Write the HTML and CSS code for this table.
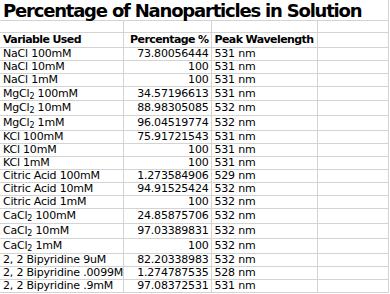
FILE: index.html
```html
<!DOCTYPE html>
<html>
<head>
<meta charset="utf-8">
<link rel="stylesheet" href="styles.css">
</head>
<body>
<table class="sheet">
  <colgroup>
    <col class="c1"><col class="c2"><col class="c3"><col class="c4">
  </colgroup>
  <tr class="title-row"><td colspan="4" class="title">Percentage of Nanoparticles in Solution</td></tr>
  <tr class="empty"><td></td><td></td><td></td><td></td></tr>
  <tr class="head tall"><td>Variable Used</td><td class="num">Percentage %</td><td>Peak Wavelength</td><td></td></tr>
  <tr><td>NaCl 100mM</td><td class="num">73.80056444</td><td>531 nm</td><td></td></tr>
  <tr><td>NaCl 10mM</td><td class="num">100</td><td>531 nm</td><td></td></tr>
  <tr><td>NaCl 1mM</td><td class="num">100</td><td>531 nm</td><td></td></tr>
  <tr class="mid"><td>MgCl<sub>2</sub> 100mM</td><td class="num">34.57196613</td><td>531 nm</td><td></td></tr>
  <tr class="tall"><td>MgCl<sub>2</sub> 10mM</td><td class="num">88.98305085</td><td>532 nm</td><td></td></tr>
  <tr class="tall"><td>MgCl<sub>2</sub> 1mM</td><td class="num">96.04519774</td><td>532 nm</td><td></td></tr>
  <tr><td>KCl 100mM</td><td class="num">75.91721543</td><td>531 nm</td><td></td></tr>
  <tr><td>KCl 10mM</td><td class="num">100</td><td>531 nm</td><td></td></tr>
  <tr><td>KCl 1mM</td><td class="num">100</td><td>531 nm</td><td></td></tr>
  <tr><td>Citric Acid 100mM</td><td class="num">1.273584906</td><td>529 nm</td><td></td></tr>
  <tr><td>Citric Acid 10mM</td><td class="num">94.91525424</td><td>532 nm</td><td></td></tr>
  <tr><td>Citric Acid 1mM</td><td class="num">100</td><td>532 nm</td><td></td></tr>
  <tr class="tall"><td>CaCl<sub>2</sub> 100mM</td><td class="num">24.85875706</td><td>532 nm</td><td></td></tr>
  <tr class="tall"><td>CaCl<sub>2</sub> 10mM</td><td class="num">97.03389831</td><td>532 nm</td><td></td></tr>
  <tr class="tall"><td>CaCl<sub>2</sub> 1mM</td><td class="num">100</td><td>532 nm</td><td></td></tr>
  <tr><td>2, 2 Bipyridine 9uM</td><td class="num">82.20338983</td><td>532 nm</td><td></td></tr>
  <tr><td>2, 2 Bipyridine .0099M</td><td class="num">1.274787535</td><td>528 nm</td><td></td></tr>
  <tr><td>2, 2 Bipyridine .9mM</td><td class="num">97.08372531</td><td>531 nm</td><td></td></tr>
</table>
</body>
</html>
```
FILE: styles.css
```css
html, body {
  margin: 0;
  padding: 0;
  background: #ffffff;
}
.sheet {
  border-collapse: collapse;
  table-layout: fixed;
  width: 388px;
  font-family: "DejaVu Sans", Verdana, sans-serif;
  font-size: 11px;
  letter-spacing: -0.2px;
  color: #000;
}
.c1 { width: 123px; }
.c2 { width: 88px; }
.c3 { width: 106px; }
.c4 { width: 71px; }
.sheet td {
  border: 1px solid #d3d3d3;
  padding: 0 2px 0 3px;
  height: 12px;
  line-height: 12px;
  white-space: nowrap;
  overflow: hidden;
  vertical-align: bottom;
}
.sheet tr:first-child td { border-top: none; }
.sheet td:first-child { border-left: none; }
.sheet .num { text-align: right; padding-right: 2px; padding-left: 0; }
.title-row td.title {
  height: 19px;
  line-height: 19px;
  font-size: 18px;
  letter-spacing: -1.2px;
  font-weight: bold;
  vertical-align: bottom;
  padding: 1px 0 0 3px;
  overflow: visible;
}
.empty td { height: 11px; }
.head td { font-weight: bold; letter-spacing: -0.6px; }
.sheet tr.mid td { height: 13px; line-height: 13px; }
.sheet tr.tall td { height: 14px; line-height: 14px; }
sub {
  font-size: 8px;
  line-height: 0;
  vertical-align: -2px;
}
```
